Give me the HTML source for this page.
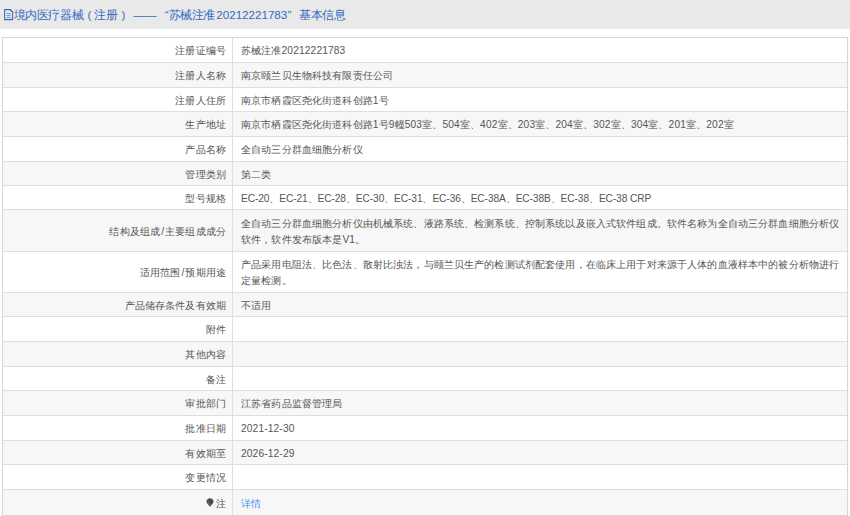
<!DOCTYPE html>
<html><head><meta charset="utf-8"><style>
html,body{margin:0;padding:0;background:#fff;width:850px;height:516px;overflow:hidden;position:relative;font-family:"Liberation Sans",sans-serif}
.hdr{position:absolute;left:0;top:0;width:850px;height:28px;background:#e9e9e9}
.t{position:absolute;top:7px;font-size:11.6px;line-height:16px;color:#3469c0;white-space:nowrap}
.doc{position:absolute;left:4px;top:9px}
.tbl{position:absolute;left:2px;top:37px;width:844px;height:477px;border:1px solid #d6d6d6}
.row{position:absolute;left:2px;width:845px;border-top:1px solid #dedede;box-sizing:border-box}
.lab{position:absolute;left:0;width:224px;text-align:right;font-size:10.2px;letter-spacing:0.14px;color:#555;top:50%;transform:translateY(-50%);margin-top:1px;line-height:16px;white-space:nowrap}
.val{position:absolute;left:239px;font-size:10.2px;letter-spacing:0.14px;color:#555;top:50%;transform:translateY(-50%);margin-top:1px;line-height:16px;white-space:nowrap}
.ec{letter-spacing:-0.1px}
.vline{position:absolute;left:232px;top:37px;width:1px;height:478px;background:#dedede}
.sl{margin:0 1px}
.lnk{color:#3d8ef0}
.pin{vertical-align:0px;margin-right:2px;margin-left:-1px}
</style></head><body>
<div class="hdr"></div><div style="position:absolute;left:0;top:28px;width:850px;height:1px;background:#eef0f4"></div><div style="position:absolute;left:0;top:29px;width:850px;height:1px;background:#f9fafc"></div>
<svg class="doc" width="10" height="12" viewBox="0 0 10 12"><path d="M0.6 0.6H6.2L8.6 3V10.6H0.6Z" fill="none" stroke="#3469c0" stroke-width="1.05"/><path d="M5.8 0.8L8.4 3.4" stroke="#3469c0" stroke-width="1"/><path d="M2.4 4.6H6.8M2.4 6.6H6.8M2.4 8.6H6.8" stroke="#3469c0" stroke-width="0.8" opacity="0.8"/></svg>
<span class="t" style="left:13.6px;letter-spacing:-0.4px">境内医疗器械</span><span class="t" style="left:87.6px">(</span><span class="t" style="left:94.2px;letter-spacing:-0.4px">注册</span><span class="t" style="left:121.4px">)</span><span class="t" style="left:133.5px">——</span><span class="t" style="left:164.8px">“</span><span class="t" style="left:168.6px;letter-spacing:-0.4px">苏械注准</span><span class="t" style="left:216.3px">20212221783</span><span class="t" style="left:287.6px">”</span><span class="t" style="left:299.2px;letter-spacing:-0.4px">基本信息</span>
<div class="row" style="top:37px;height:25px;background:#fff"><div class="lab">注册证编号</div><div class="val">苏械注准20212221783</div></div>
<div class="row" style="top:62px;height:25px;background:#f7f7f7"><div class="lab">注册人名称</div><div class="val">南京颐兰贝生物科技有限责任公司</div></div>
<div class="row" style="top:87px;height:24px;background:#fff"><div class="lab">注册人住所</div><div class="val">南京市栖霞区尧化街道科创路1号</div></div>
<div class="row" style="top:111px;height:25px;background:#f7f7f7"><div class="lab">生产地址</div><div class="val">南京市栖霞区尧化街道科创路1号9幢503室、504室、402室、203室、204室、302室、304室、201室、202室</div></div>
<div class="row" style="top:136px;height:25px;background:#fff"><div class="lab">产品名称</div><div class="val">全自动三分群血细胞分析仪</div></div>
<div class="row" style="top:161px;height:24px;background:#f7f7f7"><div class="lab">管理类别</div><div class="val">第二类</div></div>
<div class="row" style="top:185px;height:24px;background:#fff"><div class="lab">型号规格</div><div class="val"><span class='ec'>EC-20、EC-21、EC-28、EC-30、EC-31、EC-36、EC-38A、EC-38B、EC-38、EC-38 CRP</span></div></div>
<div class="row" style="top:209px;height:42px;background:#f7f7f7"><div class="lab">结构及组成<span class=sl>/</span>主要组成成分</div><div class="val">全自动三分群血细胞分析仪由机械系统、液路系统、检测系统、控制系统以及嵌入式软件组成。软件名称为全自动三分群血细胞分析仪<br>软件，软件发布版本是V1。</div></div>
<div class="row" style="top:251px;height:41px;background:#fff"><div class="lab">适用范围<span class=sl>/</span>预期用途</div><div class="val">产品采用电阻法、比色法、散射比浊法，与颐兰贝生产的检测试剂配套使用，在临床上用于对来源于人体的血液样本中的被分析物进行<br>定量检测。</div></div>
<div class="row" style="top:292px;height:24px;background:#f7f7f7"><div class="lab">产品储存条件及有效期</div><div class="val">不适用</div></div>
<div class="row" style="top:316px;height:25px;background:#fff"><div class="lab">附件</div><div class="val"></div></div>
<div class="row" style="top:341px;height:25px;background:#f7f7f7"><div class="lab">其他内容</div><div class="val"></div></div>
<div class="row" style="top:366px;height:24px;background:#fff"><div class="lab">备注</div><div class="val"></div></div>
<div class="row" style="top:390px;height:25px;background:#f7f7f7"><div class="lab">审批部门</div><div class="val">江苏省药品监督管理局</div></div>
<div class="row" style="top:415px;height:25px;background:#fff"><div class="lab">批准日期</div><div class="val">2021-12-30</div></div>
<div class="row" style="top:440px;height:24px;background:#f7f7f7"><div class="lab">有效期至</div><div class="val">2026-12-29</div></div>
<div class="row" style="top:464px;height:25px;background:#fff"><div class="lab">变更情况</div><div class="val"></div></div>
<div class="row" style="top:489px;height:26px;background:#f7f7f7"><div class="lab"><svg class="pin" width="8" height="9" viewBox="0 0 8 9"><path d="M4 0.2C2 0.2 0.5 1.7 0.5 3.6C0.5 5.2 2.2 6.6 3 7.6L4 8.9L5 7.6C5.8 6.6 7.5 5.2 7.5 3.6C7.5 1.7 6 0.2 4 0.2Z" fill="#4a4a4a"/><path d="M2 3.8C2 5 3 6 3.6 6.8" stroke="#888" stroke-width="0.8" fill="none"/></svg>注</div><div class="val"><span class='lnk'>详情</span></div></div>
<div class="vline"></div>
<div class="tbl"></div>
</body></html>
